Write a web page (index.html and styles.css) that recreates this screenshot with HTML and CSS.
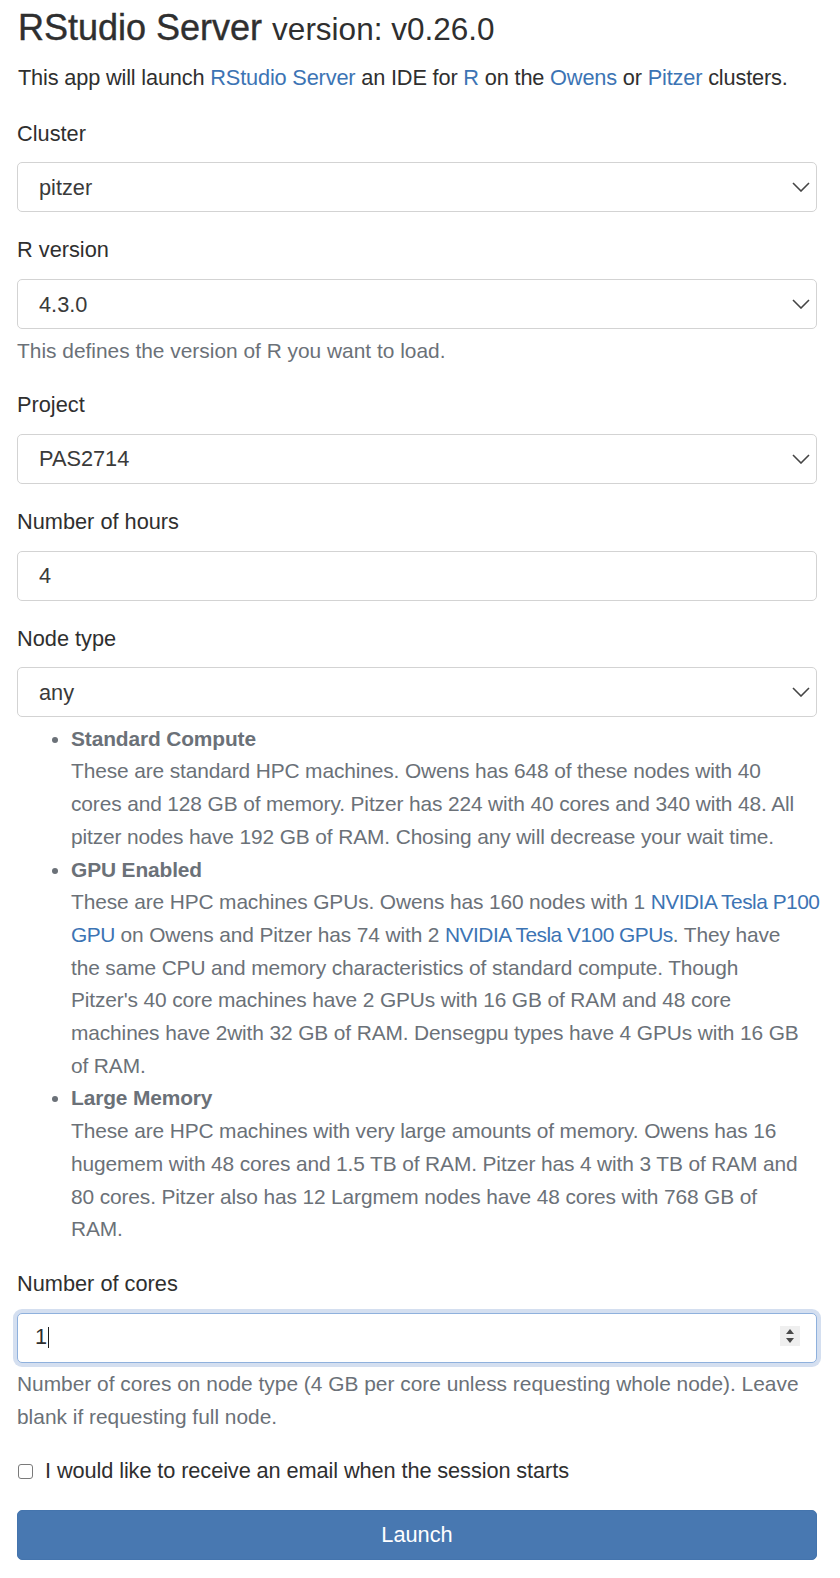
FILE: index.html
```html
<!DOCTYPE html>
<html lang="en">
<head>
<meta charset="utf-8">
<title>RStudio Server</title>
<link rel="stylesheet" href="styles.css">
</head>
<body>
<div class="page">
  <h1 class="title">RStudio Server <small class="title-sub">version: v0.26.0</small></h1>
  <p class="intro">This app will launch <a class="link" href="#">RStudio Server</a> an IDE for <a class="link" href="#">R</a> on the <a class="link" href="#">Owens</a> or <a class="link" href="#">Pitzer</a> clusters.</p>

  <form class="form">
    <div class="group">
      <label class="label">Cluster</label>
      <div class="select-wrap">
        <select class="control select"><option>pitzer</option></select>
        <svg class="chevron" width="18" height="10" viewBox="0 0 18 10"><polyline points="1,1 9,9 17,1" fill="none" stroke="#454545" stroke-width="1.6"/></svg>
      </div>
    </div>

    <div class="group">
      <label class="label">R version</label>
      <div class="select-wrap">
        <select class="control select"><option>4.3.0</option></select>
        <svg class="chevron" width="18" height="10" viewBox="0 0 18 10"><polyline points="1,1 9,9 17,1" fill="none" stroke="#454545" stroke-width="1.6"/></svg>
      </div>
      <div class="help">This defines the version of R you want to load.</div>
    </div>

    <div class="group">
      <label class="label">Project</label>
      <div class="select-wrap">
        <select class="control select"><option>PAS2714</option></select>
        <svg class="chevron" width="18" height="10" viewBox="0 0 18 10"><polyline points="1,1 9,9 17,1" fill="none" stroke="#454545" stroke-width="1.6"/></svg>
      </div>
    </div>

    <div class="group">
      <label class="label">Number of hours</label>
      <input class="control" type="text" value="4">
    </div>

    <div class="group">
      <label class="label">Node type</label>
      <div class="select-wrap">
        <select class="control select"><option>any</option></select>
        <svg class="chevron" width="18" height="10" viewBox="0 0 18 10"><polyline points="1,1 9,9 17,1" fill="none" stroke="#454545" stroke-width="1.6"/></svg>
      </div>
      <div class="help">
        <ul class="types">
          <li><strong>Standard Compute</strong><br>These are standard HPC machines. Owens has 648 of these nodes with 40<br>cores and 128 GB of memory. Pitzer has 224 with 40 cores and 340 with 48. All<br>pitzer nodes have 192 GB of RAM. Chosing any will decrease your wait time.</li>
          <li><strong>GPU Enabled</strong><br>These are HPC machines GPUs. Owens has 160 nodes with 1 <a class="link" href="#">NVIDIA Tesla P100<br>GPU</a> on Owens and Pitzer has 74 with 2 <a class="link" href="#">NVIDIA Tesla V100 GPUs</a>. They have<br>the same CPU and memory characteristics of standard compute. Though<br>Pitzer's 40 core machines have 2 GPUs with 16 GB of RAM and 48 core<br>machines have 2with 32 GB of RAM. Densegpu types have 4 GPUs with 16 GB<br>of RAM.</li>
          <li><strong>Large Memory</strong><br>These are HPC machines with very large amounts of memory. Owens has 16<br>hugemem with 48 cores and 1.5 TB of RAM. Pitzer has 4 with 3 TB of RAM and<br>80 cores. Pitzer also has 12 Largmem nodes have 48 cores with 768 GB of<br>RAM.</li>
        </ul>
      </div>
    </div>

    <div class="group">
      <label class="label">Number of cores</label>
      <div class="number-wrap">
        <div class="control control-focus"><span class="value">1</span><span class="caret"></span></div>
        <span class="spinner">
          <svg width="20" height="20" viewBox="0 0 20 20"><polygon points="6,8 10,3 14,8" fill="#4a4a4a"/><polygon points="6,12 14,12 10,17" fill="#4a4a4a"/></svg>
        </span>
      </div>
      <div class="help">Number of cores on node type (4 GB per core unless requesting whole node). Leave blank if requesting full node.</div>
    </div>

    <div class="group">
      <label class="check-label"><input class="check" type="checkbox"> I would like to receive an email when the session starts</label>
    </div>

    <button class="launch" type="button">Launch</button>
  </form>
</div>
</body>
</html>
```

FILE: styles.css
```css
* {
  box-sizing: border-box;
}

html, body {
  margin: 0;
  padding: 0;
  background: #ffffff;
}

body {
  font-family: "Liberation Sans", Arial, sans-serif;
  font-size: 21.76px;
  line-height: 32.7px;
  color: #2f2f2f;
}

.page {
  width: 840px;
  padding: 7px 23px 20px 17px;
}

.title {
  margin: 0 0 12px 1px;
  font-size: 36px;
  line-height: 42px;
  font-weight: 400;
  color: #2f2f2f;
  -webkit-text-stroke: 0.4px #2f2f2f;
}

.title-sub {
  font-size: 31.5px;
  font-weight: 400;
  -webkit-text-stroke: 0;
}

.intro {
  margin: 0 0 23px 1px;
  letter-spacing: -0.17px;
}

.link {
  color: #3c74b4;
  text-decoration: none;
}

.form {
  margin: 0;
}

.group {
  margin-bottom: 22px;
}

.label {
  display: block;
  margin-bottom: 12px;
}

.control {
  display: block;
  width: 100%;
  height: 50px;
  padding: 0 21px;
  font-family: inherit;
  font-size: 21.76px;
  color: #3a3a3a;
  background: #ffffff;
  border: 1px solid #d3d3d3;
  border-radius: 5px;
  outline: none;
}

.select-wrap,
.number-wrap {
  position: relative;
}

.select {
  -webkit-appearance: none;
  appearance: none;
}

.chevron {
  position: absolute;
  right: 7px;
  top: 20px;
}

.help {
  margin-top: 5.4px;
  font-size: 20.9px;
  line-height: 32.7px;
  color: #6b7178;
}

.types {
  margin: 0;
  padding-left: 54px;
}

.types li {
  white-space: nowrap;
  letter-spacing: -0.12px;
}

.types .link {
  letter-spacing: -0.5px;
}

.types strong {
  font-weight: 700;
}

.control-focus {
  display: flex;
  align-items: center;
  padding-left: 17px;
  border-color: #8fb1dd;
  box-shadow: 0 0 0 4px #d4dff0;
}

.value {
  color: #2f2f2f;
}

.caret {
  display: inline-block;
  width: 1.5px;
  height: 21px;
  margin-left: 0.5px;
  background: #1e1e1e;
}

.spinner {
  position: absolute;
  right: 17px;
  top: 13px;
  width: 20px;
  height: 20px;
  background: #efefef;
}

.spinner svg {
  display: block;
}

.check-label {
  display: flex;
  align-items: center;
  letter-spacing: -0.1px;
}

.check {
  -webkit-appearance: none;
  appearance: none;
  width: 15px;
  height: 15px;
  margin: 0 12px 0 1px;
  border: 1px solid #7a7a7a;
  border-radius: 3px;
  background: #ffffff;
}

.launch {
  display: block;
  width: 100%;
  height: 50px;
  margin: 0;
  font-family: inherit;
  font-size: 21.76px;
  color: #ffffff;
  background: #4878b1;
  border: 1px solid #4474ad;
  border-radius: 5px;
}
```
